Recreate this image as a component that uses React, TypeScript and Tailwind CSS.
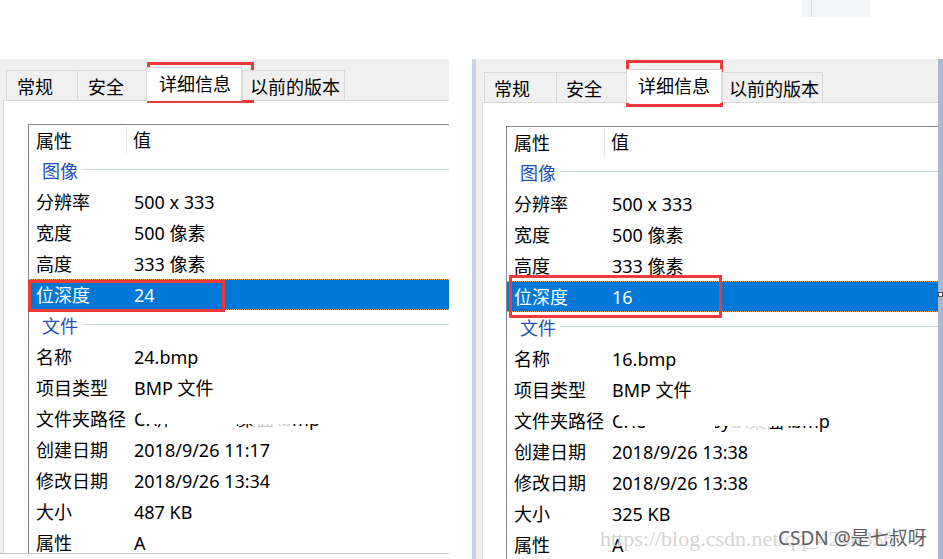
import React from "react";

interface Item {
  k: string;
  v?: string;
  group?: boolean;
  selected?: boolean;
  masked?: boolean;
}

const leftRows: Item[] = [
  { k: "图像", group: true },
  { k: "分辨率", v: "500 x 333" },
  { k: "宽度", v: "500 像素" },
  { k: "高度", v: "333 像素" },
  { k: "位深度", v: "24", selected: true },
  { k: "文件", group: true },
  { k: "名称", v: "24.bmp" },
  { k: "项目类型", v: "BMP 文件" },
  { k: "文件夹路径", v: "C:\\用户\\gao\\桌面\\bmp", masked: true },
  { k: "创建日期", v: "2018/9/26 11:17" },
  { k: "修改日期", v: "2018/9/26 13:34" },
  { k: "大小", v: "487 KB" },
  { k: "属性", v: "A" },
];

const rightRows: Item[] = [
  { k: "图像", group: true },
  { k: "分辨率", v: "500 x 333" },
  { k: "宽度", v: "500 像素" },
  { k: "高度", v: "333 像素" },
  { k: "位深度", v: "16", selected: true },
  { k: "文件", group: true },
  { k: "名称", v: "16.bmp" },
  { k: "项目类型", v: "BMP 文件" },
  { k: "文件夹路径", v: "C:\\Users\\gaoyu\\桌面\\bmp", masked: true },
  { k: "创建日期", v: "2018/9/26 13:38" },
  { k: "修改日期", v: "2018/9/26 13:38" },
  { k: "大小", v: "325 KB" },
  { k: "属性", v: "A" },
];

function Row({ item }: { item: Item }) {
  if (item.group) {
    return (
      <div className="flex h-[31px] items-center pl-[13px]">
        <span className="text-[#1f4fb8]">{item.k}</span>
        <div className="ml-[4px] mt-[-2px] h-px flex-1 bg-[#c9d4e6]" />
      </div>
    );
  }
  return (
    <div
      className={
        item.selected
          ? "flex h-[31px] items-center border-y border-dotted border-[#e89a50] bg-[#0078d7] text-white"
          : "flex h-[31px] items-center"
      }
    >
      <div className="w-[98px] shrink-0 whitespace-nowrap pl-[7px]">{item.k}</div>
      <div className="relative whitespace-nowrap pl-[7px]">
        {item.v}
        {item.masked && (
          <>
            <div className="absolute left-[14px] top-0 h-[14px] w-[200px] bg-white" />
            <div className="absolute left-[40px] top-[10px] h-[16px] w-[70px] bg-white" />
            <div className="absolute left-[125px] top-[12px] h-[14px] w-[40px] bg-white/80" />
          </>
        )}
      </div>
    </div>
  );
}

function Tabs({ widths, pads }: { widths: number[]; pads: number[] }) {
  const names = ["常规", "安全", "详细信息", "以前的版本"];
  return (
    <div className="relative z-10 flex h-[30px] items-end">
      {names.map((n, i) =>
        i === 2 ? (
          <div
            key={n}
            style={{ width: widths[i], paddingLeft: pads[i] }}
            className="-mb-px h-[34px] border-x border-t border-[#d9d9d9] bg-white pt-[7px]"
          >
            {n}
          </div>
        ) : (
          <div
            key={n}
            style={{ width: widths[i], paddingLeft: pads[i] }}
            className="h-[30px] border-l border-t border-[#d9d9d9] bg-[#f0f0f0] pt-[7px] last:border-r"
          >
            {n}
          </div>
        )
      )}
    </div>
  );
}

function ListView({ rows }: { rows: Item[] }) {
  return (
    <div className="w-[560px] border border-[#828790] bg-white">
      <div className="flex h-[30px] items-center">
        <div className="mt-[2px] flex h-[28px] w-[98px] items-center border-r border-[#e5e5e5] pl-[7px]">属性</div>
        <div className="pl-[6px]">值</div>
      </div>
      {rows.map((r) => (
        <Row key={r.k} item={r} />
      ))}
    </div>
  );
}

export default function App() {
  return (
    <div className="relative h-[559px] w-[943px] overflow-hidden bg-white font-['Noto_Sans','Noto_Sans_CJK_SC',sans-serif] text-[18px] leading-none text-black">
      <div className="h-[59px] pl-[802px]">
        <div className="h-[17px] w-[68px] bg-[#f3f4f6] pl-[9px]">
          <div className="h-full w-px bg-[#dcdcdc]" />
        </div>
      </div>

      <div className="flex">
        {/* 左侧属性窗口 */}
        <div className="flex h-[495px] w-[449px] flex-col overflow-hidden border-b border-[#bfc6d1] bg-[#f0f0f0] pl-[3px] pt-[11px]">
          <div className="pl-[3px]">
            <Tabs widths={[71, 69, 96, 103]} pads={[10, 10, 12, 7]} />
          </div>
          <div className="flex-1 border-l border-t border-[#d9d9d9] bg-white pl-[24px] pt-[23px]">
            <ListView rows={leftRows} />
          </div>
        </div>

        <div className="w-[23px]" />

        {/* 右侧属性窗口 */}
        <div className="flex h-[500px] w-[471px]">
          <div className="w-[4px] bg-[#c9d3e4]" />
          <div className="flex flex-1 flex-col overflow-hidden bg-[#f0f0f0] pl-[6px] pt-[13px]">
            <div className="pl-[2px]">
              <Tabs widths={[72, 70, 96, 101]} pads={[9, 9, 11, 6]} />
            </div>
            <div className="flex-1 border-l border-t border-[#d9d9d9] bg-white pl-[23px] pt-[23px]">
              <ListView rows={rightRows} />
            </div>
          </div>
          <div className="relative w-[5px] bg-[#a9b9d1]">
            <div className="absolute left-0 top-[233px] h-[5px] w-[5px] border border-[#555] bg-white" />
          </div>
        </div>
      </div>

      {/* 红色标注框 */}
      <div className="absolute left-[147px] top-[62px] h-[41px] w-[107px] border-[3px] border-[#ee3a3a]" />
      <div className="absolute left-[28px] top-[280px] h-[32px] w-[197px] border-[3px] border-[#ee3a3a]" />
      <div className="absolute left-[626px] top-[60px] h-[47px] w-[97px] border-[3px] border-[#ee3a3a]" />
      <div className="absolute left-[509px] top-[275px] h-[43px] w-[213px] border-[3px] border-[#ee3a3a]" />

      {/* 水印 */}
      <div className="absolute left-[600px] top-[528px] whitespace-nowrap font-['Liberation_Serif',serif] text-[22px] text-[#d4d4d4]">
        https://blog.csdn.net/qq_4246356
      </div>
      <div className="absolute left-[778px] top-[529px] whitespace-nowrap text-[19px] text-[#5f5f5f] [text-shadow:0_0_2px_#fff]">
        CSDN @是七叔呀
      </div>
    </div>
  );
}
